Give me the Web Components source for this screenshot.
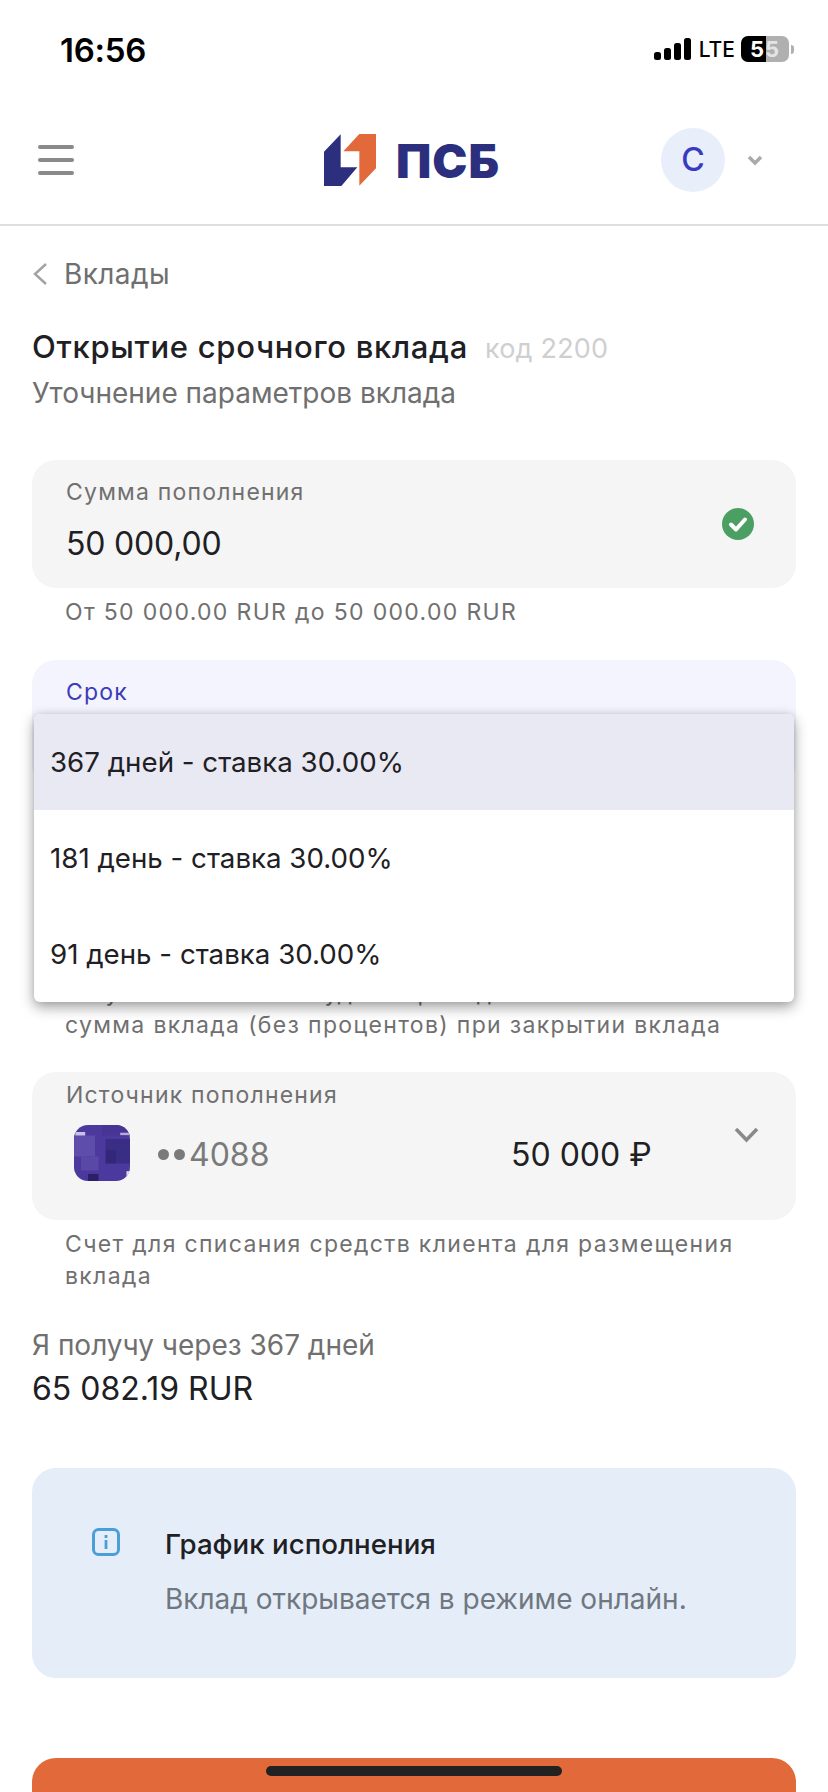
<!DOCTYPE html>
<html lang="ru">
<head>
<meta charset="utf-8">
<title>Открытие срочного вклада</title>
<style>
  html, body { margin: 0; padding: 0; background: #fff; }
  body { width: 828px; height: 1792px; overflow: hidden; position: relative; font-family: Inter, "Noto Sans", sans-serif; color: #1e2024; }
  main { display: block; padding: 0 32px; }
</style>
</head>
<body>
<status-bar></status-bar>
<app-header></app-header>
<main>
  <back-link>Вклады</back-link>
  <page-title code="код 2200" sub="Уточнение параметров вклада">Открытие срочного вклада</page-title>

  <field-card label="Сумма пополнения" style="margin-top:49px">
    <amount-value>50 000,00</amount-value>
    <svg slot="aside" width="32" height="32" viewBox="0 0 32 32"><circle cx="16" cy="16" r="16" fill="#4c9f63"/><path d="M9 16.5l5 5 9-10" fill="none" stroke="#fff" stroke-width="4" stroke-linecap="round" stroke-linejoin="round"/></svg>
  </field-card>
  <help-text>От 50 000.00 RUR до 50 000.00 RUR</help-text>

  <field-card label="Срок" active style="margin-top:32px">
    <option-menu slot="overlay">
      <menu-option selected>367 дней - ставка 30.00%</menu-option>
      <menu-option>181 день - ставка 30.00%</menu-option>
      <menu-option>91 день - ставка 30.00%</menu-option>
    </option-menu>
  </field-card>
  <help-text style="margin-top:189px">На указанный счет будет переведена<br>сумма вклада (без процентов) при закрытии вклада</help-text>

  <source-card label="Источник пополнения" number="4088" amount="50 000 ₽"></source-card>
  <help-text>Счет для списания средств клиента для размещения<br>вклада</help-text>

  <payout-summary label="Я получу через 367 дней" amount="65 082.19 RUR"></payout-summary>
  <info-note heading="График исполнения">Вклад открывается в режиме онлайн.</info-note>
  <primary-button></primary-button>
</main>
<home-indicator></home-indicator>

<script>
class StatusBar extends HTMLElement {
  constructor() {
    super();
    this.attachShadow({ mode: 'open' }).innerHTML = `
      <style>
        :host { display: flex; align-items: center; justify-content: space-between; height: 98px; box-sizing: border-box; padding: 0 34px 0 60px; color: #000; }
        .time { font: 600 33px/1 Inter, sans-serif; letter-spacing: -.3px; position: relative; top: 1px; }
        .right { display: flex; align-items: center; }
        .lte { font: 500 21px/1 Inter, sans-serif; margin: 0 6px 0 8px; letter-spacing: 0; }
        .batt { position: relative; display: flex; width: 48px; height: 26px; border-radius: 7px; overflow: hidden; background: linear-gradient(90deg, #000 52%, #b0b0b0 52%); justify-content: center; align-items: center; font: 700 22px/1 Inter, sans-serif; letter-spacing: 1px; }
        .batt b { font-weight: 700; color: #fff; }
        .batt b + b { color: #e4e4e4; }
        .nub { width: 3px; height: 9px; margin-left: 2px; background: #b0b0b0; border-radius: 0 3px 3px 0; }
      </style>
      <span class="time">16:56</span>
      <span class="right">
        <svg width="37" height="22" viewBox="0 0 37 22" fill="#000"><rect x="0" y="14" width="7" height="8" rx="2.5"/><rect x="10" y="10" width="7" height="12" rx="2.5"/><rect x="20" y="5" width="7" height="17" rx="2.5"/><rect x="30" y="0" width="7" height="22" rx="2.5"/></svg>
        <span class="lte">LTE</span>
        <span class="batt"><b>5</b><b>5</b></span><span class="nub"></span>
      </span>`;
  }
}

class AppHeader extends HTMLElement {
  constructor() {
    super();
    this.attachShadow({ mode: 'open' }).innerHTML = `
      <style>
        :host { display: flex; align-items: center; height: 128px; box-sizing: border-box; padding: 0 65px 2px 38px; border-bottom: 2px solid #dfdfdf; }
        .burger { display: flex; flex-direction: column; gap: 9px; width: 36px; }
        .burger i { display: block; height: 4px; border-radius: 2px; background: #8a8a8a; }
        .logo { display: flex; align-items: center; margin-left: 250px; }
        .word { margin-left: 20px; font: 900 47px/1 Inter, sans-serif; color: #2b2f7e; letter-spacing: 1px; }
        .avatar { display: flex; align-items: center; justify-content: center; width: 64px; height: 64px; margin-left: auto; border-radius: 50%; background: #e8effb; color: #3a3ac0; font: 500 32px/1 Inter, sans-serif; }
        svg.chev { margin-left: 22px; }
      </style>
      <span class="burger"><i></i><i></i><i></i></span>
      <span class="logo">
        <svg width="52" height="52" viewBox="72 72 156 156"><path fill="#2b2f7e" d="M72 125L122 73V172H172L124 228H72Z"/><path fill="#e2693a" d="M130 124L178 72H228V175L178 227V124Z"/></svg>
        <span class="word">ПСБ</span>
      </span>
      <span class="avatar">С</span>
      <svg class="chev" width="16" height="11" viewBox="0 0 16 11"><path d="M2 2l6 6 6-6" fill="none" stroke="#aaa" stroke-width="3.5"/></svg>`;
  }
}

class BackLink extends HTMLElement {
  constructor() {
    super();
    this.attachShadow({ mode: 'open' }).innerHTML = `
      <style>
        :host { display: flex; align-items: center; gap: 16px; margin-top: 32px; height: 32px; font: 400 28px/32px Inter, sans-serif; letter-spacing: .4px; color: #6f6f6f; }
      </style>
      <svg width="16" height="24" viewBox="0 0 16 24"><path d="M14 2L3 12l11 10" fill="none" stroke="#a2a2a2" stroke-width="2.4"/></svg>
      <slot></slot>`;
  }
}

class PageTitle extends HTMLElement {
  constructor() {
    super();
    this.attachShadow({ mode: 'open' }).innerHTML = `
      <style>
        :host { display: block; margin-top: 39px; }
        .top { display: flex; align-items: baseline; gap: 17px; height: 36px; font: 500 31px/36px Inter, sans-serif; letter-spacing: .7px; color: #1e2024; }
        .code { font-size: 27px; font-weight: 400; letter-spacing: .2px; color: #cfcfcf; }
        .sub { margin-top: 10px; font: 400 28px/36px Inter, sans-serif; color: #6f6f6f; }
      </style>
      <div class="top"><span><slot></slot></span><span class="code">${this.getAttribute('code')}</span></div>
      <div class="sub">${this.getAttribute('sub')}</div>`;
  }
}

class FieldCard extends HTMLElement {
  constructor() {
    super();
    var active = this.hasAttribute('active');
    this.attachShadow({ mode: 'open' }).innerHTML = `
      <style>
        :host { display: block; position: relative; height: 128px; box-sizing: border-box; padding: 18px 34px 0; border-radius: 24px; background: ${active ? '#f4f4fe' : '#f5f5f5'}; }
        .label { font: 400 23px/28px Inter, sans-serif; letter-spacing: 1.2px; color: ${active ? '#3c3cb8' : '#707070'}; }
        .aside { position: absolute; top: 48px; right: 42px; height: 32px; }
        .overlay { position: absolute; top: 54px; left: 2px; right: 2px; z-index: 2; }
      </style>
      <div class="label">${this.getAttribute('label')}</div>
      <slot></slot>
      <div class="aside"><slot name="aside"></slot></div>
      <div class="overlay"><slot name="overlay"></slot></div>`;
  }
}

class AmountValue extends HTMLElement {
  constructor() {
    super();
    this.attachShadow({ mode: 'open' }).innerHTML = `
      <style>:host { display: block; margin-top: 18px; font: 400 32px/40px Inter, sans-serif; letter-spacing: -.2px; color: #1e2024; }</style>
      <slot></slot>`;
  }
}

class HelpText extends HTMLElement {
  constructor() {
    super();
    this.attachShadow({ mode: 'open' }).innerHTML = `
      <style>:host { display: block; margin: 8px 0 0 33px; font: 400 23px/32px Inter, sans-serif; letter-spacing: 1.33px; color: #707070; white-space: nowrap; }</style>
      <slot></slot>`;
  }
}

class OptionMenu extends HTMLElement {
  constructor() {
    super();
    this.attachShadow({ mode: 'open' }).innerHTML = `
      <style>:host { display: block; overflow: hidden; border-radius: 6px; background: #fff; box-shadow: 0 5px 14px rgba(0,0,0,.38), 0 0 6px rgba(0,0,0,.08); }</style>
      <slot></slot>`;
  }
}

class MenuOption extends HTMLElement {
  constructor() {
    super();
    this.attachShadow({ mode: 'open' }).innerHTML = `
      <style>
        :host { display: flex; align-items: center; height: 96px; padding-left: 16px; font: 400 27.7px/32px Inter, sans-serif; color: #1e2024; }
        :host([selected]) { background: #e9e9f4; }
      </style>
      <slot></slot>`;
  }
}

class SourceCard extends HTMLElement {
  constructor() {
    super();
    this.attachShadow({ mode: 'open' }).innerHTML = `
      <style>
        :host { display: block; height: 148px; box-sizing: border-box; margin-top: 31px; padding: 9px 37px 0 42px; border-radius: 24px; background: #f5f5f5; }
        .label { margin-left: -8px; font: 400 23px/28px Inter, sans-serif; letter-spacing: 1.2px; color: #707070; }
        .row { display: flex; align-items: center; margin-top: 16px; height: 56px; }
        .num { display: flex; align-items: center; width: 353px; margin-left: 28px; padding-top: 3px; font: 400 32px/40px Inter, sans-serif; color: #7a7a7a; }
        .dots { display: flex; gap: 5px; margin-right: 4px; }
        .dots i { width: 11px; height: 11px; border-radius: 50%; background: #7a7a7a; }
        .amt { padding-top: 3px; font: 400 32px/40px Inter, sans-serif; color: #1e2024; }
        svg.chev { align-self: flex-start; margin: 2px 0 0 auto; }
      </style>
      <div class="label">${this.getAttribute('label')}</div>
      <div class="row">
        <svg width="56" height="56" viewBox="0 0 8 8" style="border-radius:14px">
          <rect width="8" height="8" fill="#4c399d"/>
          <rect x="0" y="1.5" width="3" height="3" fill="#5f4daa"/>
          <rect x="1" y="4.5" width="2.5" height="2" fill="#5a48a6"/>
          <rect x="4" y="0" width="4" height="1.5" fill="#463594"/>
          <rect x="4.5" y="2" width="1.5" height="1.5" fill="#3a2d85"/>
          <rect x="6" y="2" width="2" height="3.5" fill="#3a2d85"/>
          <rect x="4.5" y="3.5" width="1.5" height="2" fill="#33277a"/>
          <rect x="2" y="7" width="1.5" height="1" fill="#2a2066"/>
          <rect x="0.2" y="1" width="1.4" height=".5" fill="#c9c2e6"/>
          <rect x="6.6" y="1.1" width="1.4" height=".35" fill="#b5acdc"/>
          <rect x="7.5" y="6.6" width=".5" height="1.4" fill="#e6e2f4"/>
        </svg>
        <span class="num"><span class="dots"><i></i><i></i></span>${this.getAttribute('number')}</span>
        <span class="amt">${this.getAttribute('amount')}</span>
        <svg class="chev" width="25" height="16" viewBox="0 0 25 16"><path d="M2 2l10.5 11L23 2" fill="none" stroke="#8a8a8a" stroke-width="3.6"/></svg>
      </div>`;
  }
}

class PayoutSummary extends HTMLElement {
  constructor() {
    super();
    this.attachShadow({ mode: 'open' }).innerHTML = `
      <style>
        :host { display: block; margin-top: 35px; }
        .l { font: 400 28px/36px Inter, sans-serif; color: #707070; }
        .a { margin-top: 6px; font: 400 32px/40px Inter, sans-serif; color: #1e2024; }
      </style>
      <div class="l">${this.getAttribute('label')}</div>
      <div class="a">${this.getAttribute('amount')}</div>`;
  }
}

class InfoNote extends HTMLElement {
  constructor() {
    super();
    this.attachShadow({ mode: 'open' }).innerHTML = `
      <style>
        :host { display: flex; align-items: flex-start; gap: 45px; height: 210px; box-sizing: border-box; margin-top: 59px; padding: 58px 60px 0; border-radius: 24px; background: #e5edf9; }
        .t { font: 500 27.7px/36px Inter, sans-serif; color: #1e2024; }
        .d { margin-top: 19px; font: 400 28px/36px Inter, sans-serif; color: #6f7780; }
        svg { flex: none; margin-top: 2px; }
      </style>
      <svg width="28" height="28" viewBox="0 0 28 28"><rect x="1.5" y="1.5" width="25" height="25" rx="5" fill="none" stroke="#4a9fd8" stroke-width="3"/><rect x="12.6" y="12" width="2.8" height="9" fill="#4a9fd8"/><rect x="12.6" y="7" width="2.8" height="3" fill="#4a9fd8"/></svg>
      <div><div class="t">${this.getAttribute('heading')}</div><div class="d"><slot></slot></div></div>`;
  }
}

class PrimaryButton extends HTMLElement {
  constructor() {
    super();
    this.attachShadow({ mode: 'open' }).innerHTML = `
      <style>:host { display: block; height: 100px; margin-top: 80px; border-radius: 24px; background: #e2693a; }</style>`;
  }
}

class HomeIndicator extends HTMLElement {
  constructor() {
    super();
    this.attachShadow({ mode: 'open' }).innerHTML = `
      <style>:host { display: block; position: absolute; left: 266px; top: 1766px; width: 296px; height: 10px; border-radius: 5px; background: #222; }</style>`;
  }
}

customElements.define('status-bar', StatusBar);
customElements.define('app-header', AppHeader);
customElements.define('back-link', BackLink);
customElements.define('page-title', PageTitle);
customElements.define('field-card', FieldCard);
customElements.define('amount-value', AmountValue);
customElements.define('help-text', HelpText);
customElements.define('option-menu', OptionMenu);
customElements.define('menu-option', MenuOption);
customElements.define('source-card', SourceCard);
customElements.define('payout-summary', PayoutSummary);
customElements.define('info-note', InfoNote);
customElements.define('primary-button', PrimaryButton);
customElements.define('home-indicator', HomeIndicator);
</script>
</body>
</html>
